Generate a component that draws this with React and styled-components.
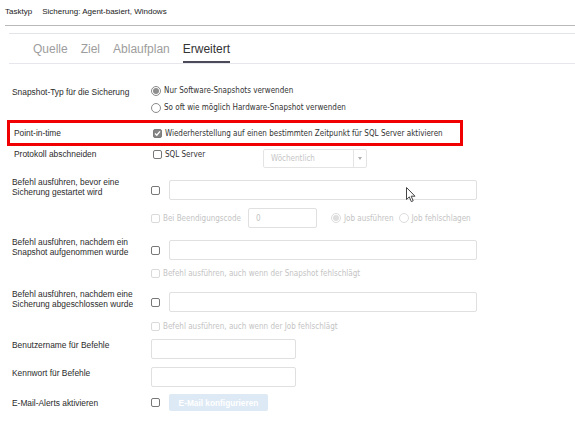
import React from "react";
import styled, { createGlobalStyle } from "styled-components";

const GlobalStyle = createGlobalStyle`
  html, body { margin: 0; padding: 0; background: #fff; }
  body { font-family: "Liberation Sans", Arial, sans-serif; color: #333; }
`;

const Page = styled.div`
  position: relative;
  width: 575px;
  height: 437px;
  overflow: hidden;
`;

const TaskBar = styled.div`
  display: flex;
  align-items: center;
  gap: 10px;
  height: 22px;
  padding: 0 5px;
  font-size: 8px;
  color: #222;
`;

const Rule = styled.div`
  height: 1px;
  margin-left: ${p => p.$indent}px;
  margin-top: ${p => p.$mt}px;
  background: ${p => p.$color};
`;

const Tabs = styled.div`
  display: flex;
  gap: 13px;
  height: 30px;
  box-sizing: border-box;
  margin-left: 9px;
  padding-left: 24px;
  border-bottom: 1px solid #e6e6ec;
`;

const Tab = styled.div`
  display: flex;
  align-items: center;
  box-sizing: border-box;
  height: 29px;
  padding-top: 3px;
  font-size: 12px;
  color: ${p => (p.$active ? "#333" : "#9d9d9d")};
  border-bottom: 2px solid ${p => (p.$active ? "#4a4a58" : "transparent")};
`;

const Form = styled.div`
  display: flex;
  flex-direction: column;
  padding-left: 12px;
`;

const Row = styled.div`
  display: grid;
  grid-template-columns: 139px 1fr;
  align-items: ${p => p.$align || "start"};
  margin-top: ${p => p.$mt || 0}px;
`;

const Highlight = styled(Row)`
  margin-left: -5px;
  width: 456px;
  height: 26px;
  box-sizing: border-box;
  border: 3px solid #f00000;
  padding-left: 4px;
`;

const Label = styled.div`
  font-size: 8.4px;
  line-height: 10px;
  color: #2b2b2b;
  padding-top: ${p => p.$pt || 0}px;
`;

const Controls = styled.div`
  display: flex;
  flex-direction: ${p => (p.$column ? "column" : "row")};
  align-items: ${p => (p.$column ? "flex-start" : "center")};
  gap: ${p => p.$gap || 0}px;
  padding-top: ${p => p.$pt || 0}px;
`;

const Option = styled.label`
  display: flex;
  align-items: center;
  gap: 3px;
  height: ${p => p.$h || 14}px;
  width: ${p => (p.$w ? p.$w + "px" : "auto")};
  font-family: "DejaVu Sans Condensed", "DejaVu Sans", sans-serif;
  font-size: 8px;
  color: ${p => (p.$disabled ? "#c4c4c4" : "#333")};
  white-space: nowrap;
`;

const Box = styled.span`
  display: inline-flex;
  align-items: center;
  justify-content: center;
  flex: none;
  width: 9px;
  height: 9px;
  box-sizing: border-box;
  border: 1px solid ${p => (p.$disabled ? "#dadada" : p.$checked ? "#7c7c7c" : "#777")};
  border-radius: 2px;
  background: ${p => (p.$checked ? "#858585" : "#fff")};
`;

const Radio = styled.span`
  display: inline-flex;
  align-items: center;
  justify-content: center;
  flex: none;
  width: 10px;
  height: 10px;
  box-sizing: border-box;
  border: 1px solid ${p => (p.$disabled ? "#dcdcdc" : "#8a8a8a")};
  border-radius: 50%;
  background: #fff;

  &::after {
    content: "";
    display: ${p => (p.$checked ? "block" : "none")};
    width: 6px;
    height: 6px;
    border-radius: 50%;
    background: ${p => (p.$disabled ? "#dedede" : "#8f8f8f")};
  }
`;

const Input = styled.div`
  flex: none;
  width: ${p => p.$w}px;
  height: ${p => p.$h || 20}px;
  box-sizing: border-box;
  border: 1px solid #e0e0e0;
  border-radius: 2px;
  background: #fff;
  display: flex;
  align-items: center;
  padding-left: 7px;
  font-family: "DejaVu Sans Condensed", "DejaVu Sans", sans-serif;
  font-size: 8px;
  color: #c4c4c4;
`;

const Select = styled.div`
  display: flex;
  width: 104px;
  height: 19px;
  margin-top: 2px;
  box-sizing: border-box;
  border: 1px solid #e4e4e4;
  border-radius: 2px;
  font-family: "DejaVu Sans Condensed", "DejaVu Sans", sans-serif;
  font-size: 8px;
  color: #c6c6c6;
`;

const SelectValue = styled.div`
  flex: 1;
  display: flex;
  align-items: center;
  padding-left: 7px;
`;

const SelectArrow = styled.div`
  width: 12px;
  display: flex;
  align-items: center;
  justify-content: center;
  border-left: 1px solid #e4e4e4;

  &::after {
    content: "";
    border-left: 2.5px solid transparent;
    border-right: 2.5px solid transparent;
    border-top: 3px solid #b0b0b0;
  }
`;

const Button = styled.div`
  width: 99px;
  height: 17px;
  border-radius: 2px;
  background: #dde9f4;
  color: #fff;
  font-size: 8.3px;
  font-weight: bold;
  display: flex;
  align-items: center;
  justify-content: center;
`;

const Cursor = styled.svg`
  position: absolute;
  left: 406px;
  top: 187px;
`;

function Check({ checked, disabled }) {
  return (
    <Box $checked={checked} $disabled={disabled}>
      {checked && (
        <svg width="7" height="7" viewBox="0 0 7 7">
          <path d="M1 3.6 L2.8 5.3 L6 1.4" fill="none" stroke="#fff" strokeWidth="1.4" />
        </svg>
      )}
    </Box>
  );
}

function CommandRow({ mt, lines }) {
  return (
    <Row $mt={mt}>
      <Label>
        {lines[0]}
        <br />
        {lines[1]}
      </Label>
      <Controls $pt={3} $gap={9}>
        <Check />
        <Input $w={308} />
      </Controls>
    </Row>
  );
}

export default function App() {
  return (
    <Page>
      <GlobalStyle />
      <TaskBar>
        <span>Tasktyp</span>
        <span>Sicherung: Agent-basiert, Windows</span>
      </TaskBar>
      <Rule $indent={5} $mt={3} $color="#b9b9b9" />
      <Rule $indent={9} $mt={7} $color="#e3e3ea" />
      <Tabs>
        <Tab>Quelle</Tab>
        <Tab>Ziel</Tab>
        <Tab>Ablaufplan</Tab>
        <Tab $active>Erweitert</Tab>
      </Tabs>

      <Form>
        <Row $mt={18}>
          <Label $pt={5}>Snapshot-Typ für die Sicherung</Label>
          <Controls $column>
            <Option $h={17}>
              <Radio $checked />
              Nur Software-Snapshots verwenden
            </Option>
            <Option $h={17}>
              <Radio />
              So oft wie möglich Hardware-Snapshot verwenden
            </Option>
          </Controls>
        </Row>

        <Highlight $align="center" $mt={4}>
          <Label>Point-in-time</Label>
          <Option>
            <Check checked />
            Wiederherstellung auf einen bestimmten Zeitpunkt für SQL Server aktivieren
          </Option>
        </Highlight>

        <Row style={{ marginLeft: 2 }} $mt={1}>
          <Label $pt={2}>Protokoll abschneiden</Label>
          <Controls style={{ alignItems: "flex-start" }}>
            <Option $w={110}>
              <Check />
              SQL Server
            </Option>
            <Select>
              <SelectValue>Wöchentlich</SelectValue>
              <SelectArrow />
            </Select>
          </Controls>
        </Row>

        <CommandRow mt={9} lines={["Befehl ausführen, bevor eine", "Sicherung gestartet wird"]} />

        <Row $mt={8}>
          <span />
          <Controls>
            <Option $disabled style={{ marginRight: 7 }}>
              <Check disabled />
              Bei Beendigungscode
            </Option>
            <Input $w={69}>0</Input>
            <Option $disabled style={{ marginLeft: 14, marginRight: 5 }}>
              <Radio $checked $disabled />
              Job ausführen
            </Option>
            <Option $disabled>
              <Radio $disabled />
              Job fehlschlagen
            </Option>
          </Controls>
        </Row>

        <CommandRow mt={9} lines={["Befehl ausführen, nachdem ein", "Snapshot aufgenommen wurde"]} />

        <Row $mt={6}>
          <span />
          <Option $disabled>
            <Check disabled />
            Befehl ausführen, auch wenn der Snapshot fehlschlägt
          </Option>
        </Row>

        <CommandRow mt={9} lines={["Befehl ausführen, nachdem eine", "Sicherung abgeschlossen wurde"]} />

        <Row $mt={7}>
          <span />
          <Option $disabled>
            <Check disabled />
            Befehl ausführen, auch wenn der Job fehlschlägt
          </Option>
        </Row>

        <Row $mt={6}>
          <Label $pt={1}>Benutzername für Befehle</Label>
          <Input $w={145} />
        </Row>

        <Row $mt={8}>
          <Label $pt={1}>Kennwort für Befehle</Label>
          <Input $w={145} />
        </Row>

        <Row $align="center" $mt={7}>
          <Label>E-Mail-Alerts aktivieren</Label>
          <Controls $gap={9}>
            <Check />
            <Button>E-Mail konfigurieren</Button>
          </Controls>
        </Row>
      </Form>

      <Cursor width="11" height="16" viewBox="0 0 11 16">
        <path d="M0.5 0.5 L0.5 12.5 L3.3 9.9 L5.3 14.6 L7.2 13.8 L5.2 9.2 L9 9.2 Z" fill="#fff" stroke="#444" strokeWidth="1" strokeLinejoin="round" />
      </Cursor>
    </Page>
  );
}
